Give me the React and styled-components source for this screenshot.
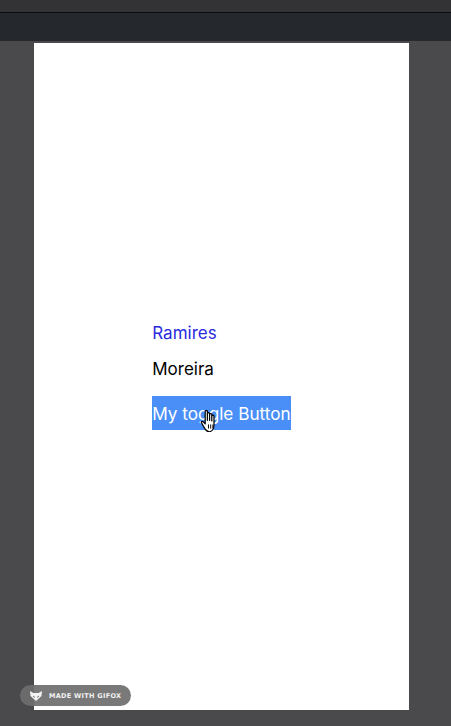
import React, { useState } from 'react';
import styled, { createGlobalStyle } from 'styled-components';

const GlobalStyle = createGlobalStyle`
  html, body {
    margin: 0;
    padding: 0;
    background: #4a4a4c;
  }
  body {
    font-family: Inter, "Liberation Sans", sans-serif;
  }
`;

export default function App() {
  const [on, setOn] = useState(true);
  return (
    <>
      <GlobalStyle />
      <Window>
        <TitleStrip />
        <Toolbar />
        <Stage>
          <Phone>
            <Content>
              <NameText $color="#2a2ae0">Ramires</NameText>
              <NameText $color="#000">Moreira</NameText>
              <ToggleButton $on={on} onClick={() => setOn(!on)}>
                My toggle Button
              </ToggleButton>
            </Content>
            <Cursor>
              <svg width="20" height="22" viewBox="1.5 1.5 14 16">
                <path
                  d="M5 2.5c0-1 1.6-1 1.6 0V9V4.2c0-1 1.6-1 1.6 0V9V4.8c0-1 1.6-1 1.6 0V9.5V6c0-1 1.6-1 1.6 0v6.5c0 3-1.8 5-4.5 5H8.4c-1.8 0-2.8-1-3.8-2.6L2.4 11c-.5-.9.6-1.6 1.3-.9L5 11.6z"
                  fill="#fff"
                  stroke="#000"
                  strokeWidth="0.9"
                  strokeLinejoin="round"
                />
                <path d="M7.4 12v3M9 12v3M10.6 12v3" stroke="#000" strokeWidth="0.7" />
              </svg>
            </Cursor>
          </Phone>
          <Badge>
            <svg width="14" height="12" viewBox="0 0 14 12">
              <path
                d="M1 1l3.5 2h5L13 1l-.5 5L7 11 1.5 6z"
                fill="#f2f2f2"
              />
              <path d="M4 6l2 1.5M10 6l-2 1.5" stroke="#777" strokeWidth="1" />
            </svg>
            <span>MADE WITH GIFOX</span>
          </Badge>
        </Stage>
      </Window>
    </>
  );
}

const Window = styled.div`
  width: 451px;
  height: 726px;
  display: flex;
  flex-direction: column;
  overflow: hidden;
`;

const TitleStrip = styled.div`
  height: 12px;
  background: #333335;
  border-bottom: 1px solid #0c0c0c;
`;

const Toolbar = styled.div`
  height: 28px;
  background: #25282d;
`;

const Stage = styled.div`
  flex: 1;
  position: relative;
  background: #4a4a4c;
  padding: 2px 0 0 34px;
`;

const Phone = styled.div`
  position: relative;
  box-sizing: border-box;
  width: 375px;
  height: 667px;
  padding-top: 280px;
  background: #fff;
  display: flex;
  flex-direction: column;
  align-items: center;
`;

const Content = styled.div`
  display: flex;
  flex-direction: column;
  align-items: flex-start;
  gap: 15px;
`;

const NameText = styled.div`
  font-size: 17px;
  line-height: 21px;
  color: ${(p) => p.$color};
`;

const ToggleButton = styled.button`
  margin-top: 1px;
  border: none;
  padding: 0;
  height: 34px;
  font-family: inherit;
  font-size: 17.2px;
  color: #fff;
  background: ${(p) => (p.$on ? '#4a8ff7' : '#999')};
  cursor: pointer;
`;

const Cursor = styled.div`
  position: absolute;
  left: 166px;
  top: 367px;
  pointer-events: none;
`;

const Badge = styled.div`
  position: absolute;
  left: 20px;
  top: 644px;
  height: 21px;
  padding: 0 10px 0 9px;
  border-radius: 11px;
  background: rgba(110, 110, 110, 0.92);
  display: flex;
  align-items: center;
  gap: 6px;
  span {
    font-family: "DejaVu Sans", sans-serif;
    font-weight: bold;
    font-size: 6.5px;
    letter-spacing: 0.3px;
    color: #f2f2f2;
  }
`;
